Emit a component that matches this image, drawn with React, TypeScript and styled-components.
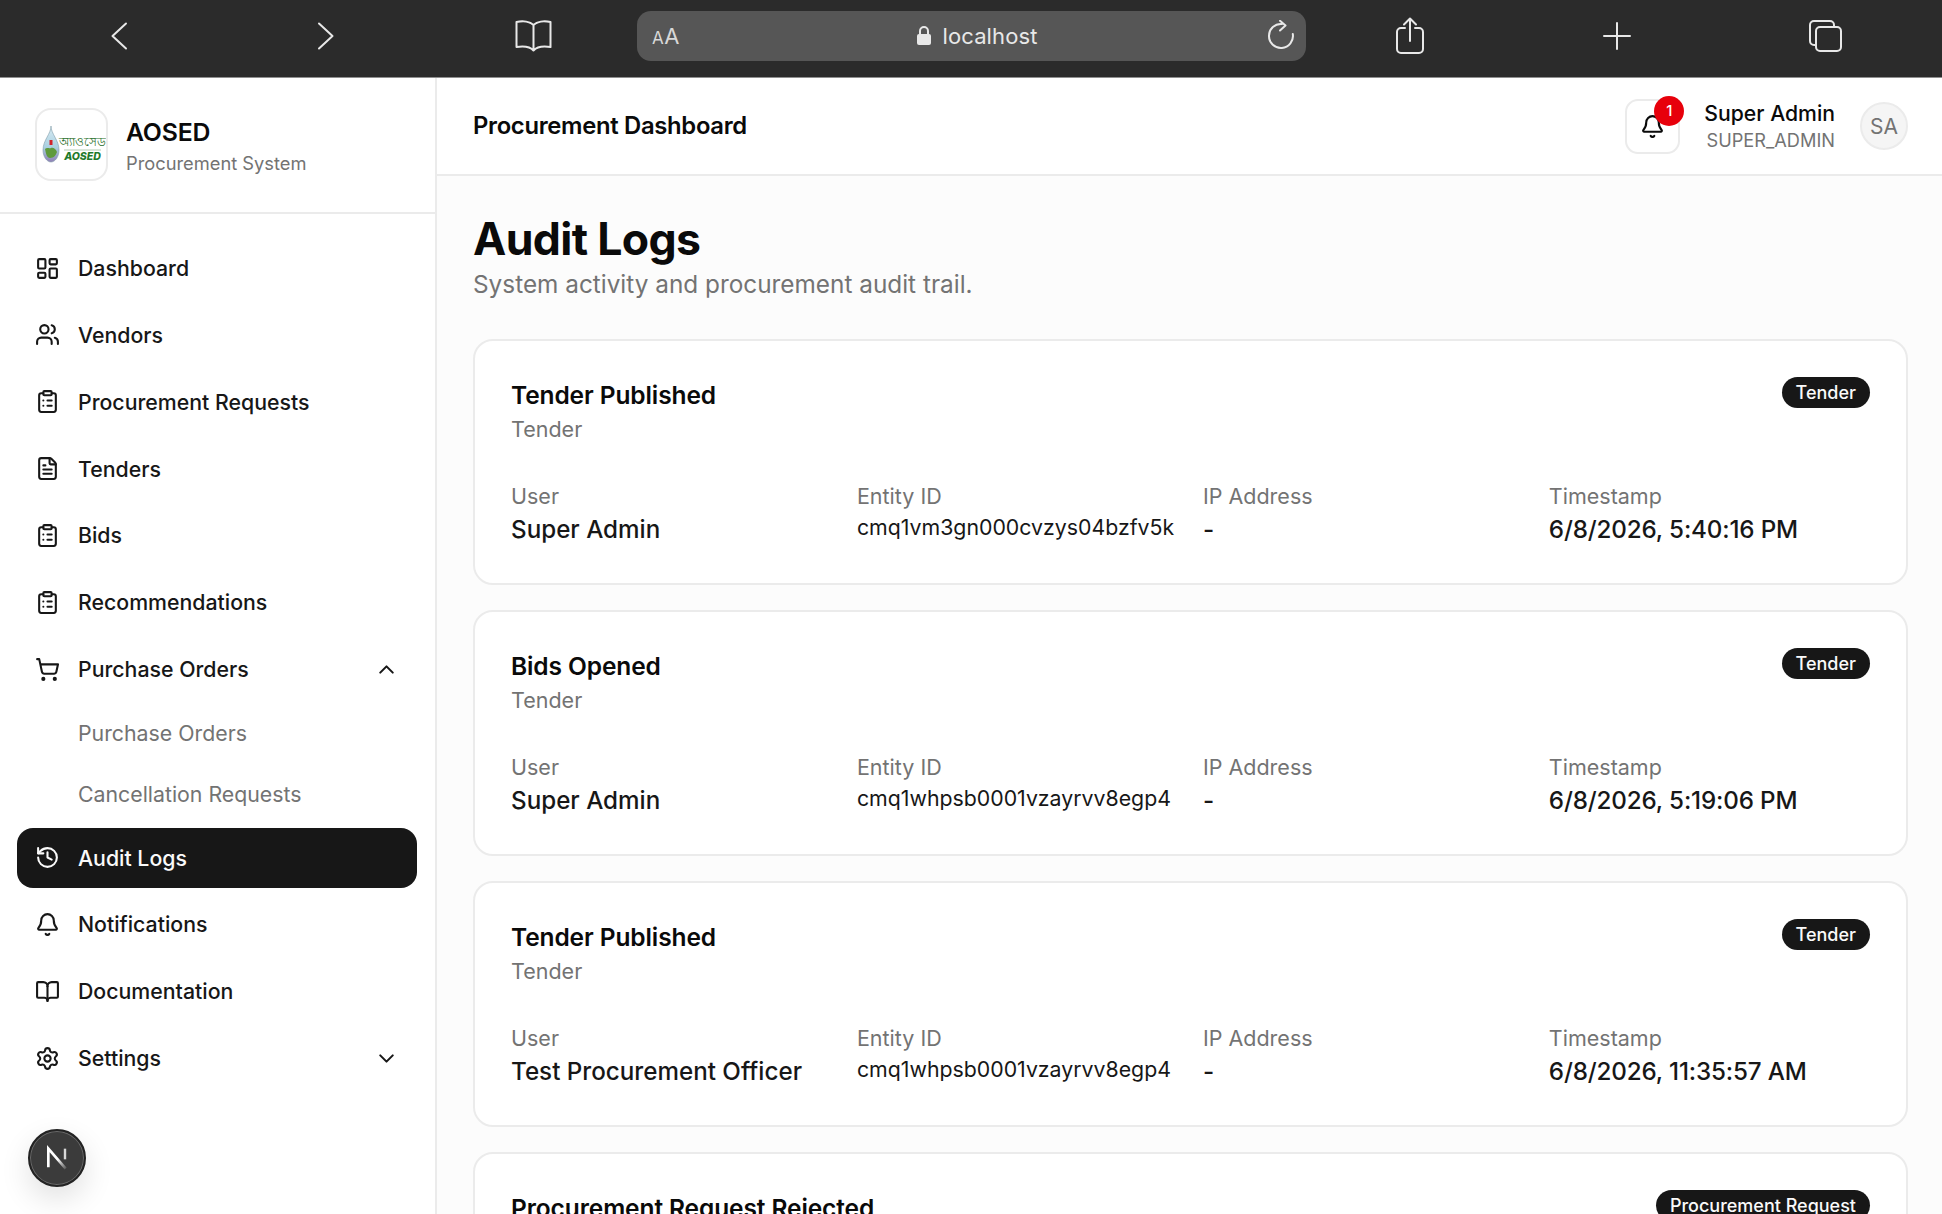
import styled, { createGlobalStyle } from 'styled-components';
import {
    LayoutDashboard,
    Users,
    ClipboardList,
    FileText,
    ShoppingCart,
    History,
    Bell,
    BookOpen,
    Settings,
    ChevronUp,
    ChevronDown,
} from 'lucide-react';

const GlobalStyle = createGlobalStyle`
    html, body {
        margin: 0;
        height: 1214px;
        overflow: hidden;
        background: #fcfcfc;
        font-family: Inter, "Noto Sans", sans-serif;
        color: #0a0a0a;
    }
    * {
        box-sizing: border-box;
    }
`;

const Page = styled.div`
    width: 1942px;
    height: 1214px;
    display: flex;
    flex-direction: column;
    overflow: hidden;
    position: relative;
`;

/* safari toolbar */
const BrowserBar = styled.div`
    height: 78px;
    flex: none;
    background: #2b2b2b;
    border-bottom: 1px solid #8f8f8f;
    padding-bottom: 5px;
    display: grid;
    grid-template-columns: 637px 669px 1fr;
    align-items: center;
    color: #e4e4e4;
`;

const BarSide = styled.div`
    display: flex;
    align-items: center;
    height: 100%;
    position: relative;
`;

const BarIcon = styled.svg<{ $left: number }>`
    position: absolute;
    left: ${p => p.$left}px;
    top: 50%;
    transform: translateY(-50%);
    fill: none;
    stroke: #e8e8e8;
    stroke-width: 2;
    stroke-linecap: round;
    stroke-linejoin: round;
`;

const UrlBox = styled.div`
    height: 50px;
    background: #565656;
    border-radius: 14px;
    display: grid;
    grid-template-columns: 1fr auto 1fr;
    align-items: center;
    padding: 0 11px 0 15px;
`;

const AaLabel = styled.div`
    font-size: 22px;
    color: #d8d8d8;
    letter-spacing: 0.5px;
    small {
        font-size: 17px;
    }
`;

const UrlText = styled.div`
    display: flex;
    align-items: center;
    gap: 11px;
    margin-left: 6px;
    font-size: 22px;
    letter-spacing: 0.1px;
    color: #e8e8e8;
`;

const ReloadWrap = styled.div`
    display: flex;
    justify-content: flex-end;
`;

/* shell */
const Shell = styled.div`
    flex: 1;
    min-height: 0;
    display: grid;
    grid-template-columns: 437px 1fr;
`;

const Sidebar = styled.aside`
    background: #fff;
    border-right: 2px solid #ebebeb;
    display: flex;
    flex-direction: column;
`;

const Brand = styled.div`
    height: 136px;
    flex: none;
    border-bottom: 2px solid #ebebeb;
    padding: 0 0 1px 35px;
    display: flex;
    align-items: center;
    gap: 18px;
`;

const LogoBox = styled.div`
    width: 73px;
    height: 73px;
    border: 2px solid #ebebeb;
    border-radius: 16px;
    background: #fff;
    overflow: hidden;
`;

const BrandText = styled.div`
    margin-top: 5px;
`;

const BrandName = styled.div`
    font-size: 24.8px;
    font-weight: 600;
    line-height: 32px;
    letter-spacing: -0.2px;
`;

const BrandSub = styled.div`
    font-size: 18.3px;
    line-height: 30px;
    color: #737373;
`;

const Nav = styled.nav`
    display: flex;
    flex-direction: column;
    gap: 6.85px;
    padding: 24px 18px 0 17px;
`;

const NavItem = styled.div<{ $active?: boolean }>`
    height: 60px;
    display: flex;
    align-items: center;
    gap: 18px;
    padding: 0 18px;
    border-radius: 16px;
    font-size: 21.3px;
    font-weight: 500;
    background: ${p => (p.$active ? '#171717' : 'transparent')};
    color: ${p => (p.$active ? '#fafafa' : '#171717')};
    svg {
        flex: none;
    }
`;

const NavLabel = styled.span`
    flex: 1;
`;

const NavChevron = styled.span`
    display: flex;
`;

const SubItem = styled.div`
    height: 54px;
    display: flex;
    align-items: center;
    padding-left: 61px;
    font-size: 21.3px;
    font-weight: 400;
    color: #737373;
`;

const DevBadge = styled.div`
    position: absolute;
    left: 28px;
    top: 1129px;
    width: 58px;
    height: 58px;
    border-radius: 50%;
    background: #3b3b3b;
    border: 2px solid #232323;
    box-shadow: 0 0 0 1px #6a6a6a inset, 0 12px 30px rgba(0, 0, 0, 0.12);
    display: flex;
    align-items: center;
    justify-content: center;
`;

/* main column */
const Main = styled.main`
    display: flex;
    flex-direction: column;
    min-width: 0;
    overflow: hidden;
    background: #fcfcfc;
`;

const Header = styled.header`
    height: 98px;
    flex: none;
    background: #fff;
    border-bottom: 2px solid #ebebeb;
    padding: 0 34px 0 36px;
    display: flex;
    align-items: center;
    justify-content: space-between;
`;

const HeaderTitle = styled.div`
    font-size: 23.8px;
    font-weight: 600;
    letter-spacing: -0.3px;
    margin-bottom: 2px;
`;

const HeaderRight = styled.div`
    display: flex;
    align-items: center;
`;

const BellButton = styled.div`
    width: 55px;
    height: 55px;
    border: 2px solid #ebebeb;
    border-radius: 13px;
    background: #fff;
    display: flex;
    align-items: center;
    justify-content: center;
    position: relative;
    margin-right: 24px;
`;

const BellCount = styled.span`
    position: absolute;
    top: -5px;
    right: -6px;
    width: 30px;
    height: 30px;
    border-radius: 50%;
    background: #e7000b;
    color: #fff;
    font-size: 14.8px;
    font-weight: 500;
    display: flex;
    align-items: center;
    justify-content: center;
`;

const UserBlock = styled.div`
    text-align: right;
    margin-right: 25px;
`;

const UserName = styled.div`
    font-size: 21.2px;
    font-weight: 500;
    line-height: 28px;
`;

const UserRole = styled.div`
    font-size: 18.2px;
    line-height: 27px;
    color: #737373;
`;

const Avatar = styled.div`
    width: 48px;
    height: 48px;
    border-radius: 50%;
    border: 2px solid #ebebeb;
    background: #f5f5f5;
    color: #737373;
    font-size: 21px;
    display: flex;
    align-items: center;
    justify-content: center;
`;

const Content = styled.div`
    padding: 36px 34px 0 36px;
`;

const PageTitle = styled.h1`
    margin: 0;
    font-size: 44.6px;
    font-weight: 700;
    line-height: 55px;
    letter-spacing: -0.65px;
    color: #0a0a0a;
`;

const PageSub = styled.p`
    margin: 0 0 38px;
    font-size: 24.35px;
    line-height: 34px;
    color: #737373;
`;

const CardList = styled.div`
    display: flex;
    flex-direction: column;
    gap: 25px;
`;

const Card = styled.section`
    height: 246px;
    flex: none;
    background: #fff;
    border: 2px solid #ebebeb;
    border-radius: 20px;
    padding: 36px 36px 0 36px;
`;

const CardTop = styled.div`
    display: flex;
    justify-content: space-between;
    align-items: flex-start;
    margin-bottom: 39px;
`;

const CardTitle = styled.div`
    font-size: 24.5px;
    font-weight: 600;
    line-height: 37px;
    letter-spacing: -0.1px;
`;

const CardEntity = styled.div`
    font-size: 21.5px;
    line-height: 30px;
    color: #737373;
`;

const Badge = styled.span`
    height: 31px;
    padding: 0 14px;
    border-radius: 16px;
    background: #171717;
    color: #fafafa;
    font-size: 18px;
    font-weight: 500;
    display: inline-flex;
    align-items: center;
`;

const Fields = styled.div`
    display: grid;
    grid-template-columns: repeat(4, 1fr);
    gap: 24.8px;
`;

const FieldLabel = styled.div`
    font-size: 21.5px;
    line-height: 26px;
    margin-bottom: 4px;
    color: #737373;
`;

const FieldValue = styled.div<{ $small?: boolean }>`
    font-size: ${p => (p.$small ? '21.3px' : '24.2px')};
    line-height: ${p => (p.$small ? '28px' : '33px')};
    font-weight: ${p => (p.$small ? 400 : 500)};
    color: #171717;
    white-space: nowrap;
`;

const FieldTime = styled(FieldValue)`
    letter-spacing: -0.15px;
`;

const navTop = [
    { label: 'Dashboard', icon: LayoutDashboard },
    { label: 'Vendors', icon: Users },
    { label: 'Procurement Requests', icon: ClipboardList },
    { label: 'Tenders', icon: FileText },
    { label: 'Bids', icon: ClipboardList },
    { label: 'Recommendations', icon: ClipboardList },
];

const logs = [
    { title: 'Tender Published', entity: 'Tender', user: 'Super Admin', id: 'cmq1vm3gn000cvzys04bzfv5k', time: '6/8/2026, 5:40:16 PM' },
    { title: 'Bids Opened', entity: 'Tender', user: 'Super Admin', id: 'cmq1whpsb0001vzayrvv8egp4', time: '6/8/2026, 5:19:06 PM' },
    { title: 'Tender Published', entity: 'Tender', user: 'Test Procurement Officer', id: 'cmq1whpsb0001vzayrvv8egp4', time: '6/8/2026, 11:35:57 AM' },
    { title: 'Procurement Request Rejected', entity: 'Procurement Request', user: 'Super Admin', id: 'cmq1whpsb0001vzayrvv8egp4', time: '6/8/2026, 11:20:10 AM' },
];

const AosedLogo = () => (
    <svg width="69" height="69" viewBox="0 0 69 69">
        <defs>
            <linearGradient id="drop" x1="0" y1="0" x2="0" y2="1">
                <stop offset="0" stopColor="#d9ecf4" />
                <stop offset="0.6" stopColor="#a9cfe0" />
                <stop offset="1" stopColor="#8f7fb5" />
            </linearGradient>
        </defs>
        <path d="M14 16c0 8 8 14 8 24 0 7-4 12-8 12s-8-5-8-12c0-10 8-16 8-24z" fill="url(#drop)" stroke="#7d9aa8" strokeWidth="0.6" />
        <path d="M8 39c2-2 4 0 6-1s5 1 6 4c-1 3-3 6-7 6-3 0-4-4-5-9z" fill="#5f9a3c" />
        <rect x="12.500" y="30" width="3" height="5" fill="#d2232a" />
        <text x="45.500" y="36" textAnchor="middle" fontSize="12" fontWeight="500" fill="#1f6e28" fontFamily="'Noto Sans', sans-serif">অ্যাওসেড</text>
        <line x1="27" y1="40" x2="64" y2="40" stroke="#9fbf9f" strokeWidth="0.8" />
        <text x="45.500" y="50" textAnchor="middle" fontSize="10.500" fontWeight="800" fontStyle="italic" fill="#1f7a2b" fontFamily="Inter, sans-serif">AOSED</text>
    </svg>
);

const NextMark = () => (
    <svg width="32" height="32" viewBox="0 0 24 24" fill="none">
        <defs>
            <linearGradient id="nfade" x1="6" y1="4" x2="20" y2="21" gradientUnits="userSpaceOnUse">
                <stop offset="0.5" stopColor="#fff" />
                <stop offset="1" stopColor="#fff" stopOpacity="0" />
            </linearGradient>
        </defs>
        <path d="M5.500 19V5l13 15" stroke="url(#nfade)" strokeWidth="2" />
        <path d="M18 5v8" stroke="#d8d8d8" strokeWidth="1.800" />
    </svg>
);

const BrowserToolbar = () => (
    <BrowserBar>
        <BarSide>
            <BarIcon $left={110} width="18" height="28" viewBox="0 0 18 28">
                <path d="M16 1.500 2.500 14 16 26.500" />
            </BarIcon>
            <BarIcon $left={317} width="18" height="28" viewBox="0 0 18 28">
                <path d="M2 1.500 15.500 14 2 26.500" />
            </BarIcon>
            <BarIcon $left={515} width="37" height="33" viewBox="0 0 37 33">
                <path d="M18.500 5.500C15 2 8 1 1.500 2.500v25C8 26.500 15 27 18.500 31c3.500-4 10.500-4.500 17-3.500v-25C29 1 22 2 18.500 5.500zM18.500 5.500V31" />
            </BarIcon>
        </BarSide>
        <UrlBox>
            <AaLabel>
                <small>A</small>A
            </AaLabel>
            <UrlText>
                <svg width="16" height="20" viewBox="0 0 16 20" fill="none">
                    <rect x="1" y="8" width="14" height="11" rx="2" fill="#e8e8e8" />
                    <path d="M4 8V5a4 4 0 0 1 8 0v3" stroke="#e8e8e8" strokeWidth="2" />
                </svg>
                localhost
            </UrlText>
            <ReloadWrap>
                <svg width="28" height="32" viewBox="0 0 28 32" fill="none" stroke="#e8e8e8" strokeWidth="2" strokeLinecap="round" strokeLinejoin="round">
                    <path d="M25.800 14A12 12 0 1 1 15 4" />
                    <path d="M13 0.800 18.500 5.500 13 10.500" />
                </svg>
            </ReloadWrap>
        </UrlBox>
        <BarSide>
            <BarIcon $left={89} width="30" height="38" viewBox="0 0 30 38">
                <path d="M15 24V2M9 7.500 15 1.500l6 6M10 11H6a4 4 0 0 0-4 4v17a4 4 0 0 0 4 4h18a4 4 0 0 0 4-4V15a4 4 0 0 0-4-4h-4" />
            </BarIcon>
            <BarIcon $left={297} width="28" height="28" viewBox="0 0 28 28">
                <path d="M14 1v26M1 14h26" />
            </BarIcon>
            <BarIcon $left={502} width="35" height="34" viewBox="0 0 35 34">
                <rect x="8" y="8" width="25" height="24" rx="4" />
                <path d="M8 26H6a4 4 0 0 1-4-4V6a4 4 0 0 1 4-4h16a4 4 0 0 1 4 4v2" />
            </BarIcon>
        </BarSide>
    </BrowserBar>
);

const SidebarNav = () => (
    <Sidebar>
        <Brand>
            <LogoBox>
                <AosedLogo />
            </LogoBox>
            <BrandText>
                <BrandName>AOSED</BrandName>
                <BrandSub>Procurement System</BrandSub>
            </BrandText>
        </Brand>
        <Nav>
            {navTop.map(item => (
                <NavItem key={item.label}>
                    <item.icon size={25} />
                    <NavLabel>{item.label}</NavLabel>
                </NavItem>
            ))}
            <NavItem>
                <ShoppingCart size={25} />
                <NavLabel>Purchase Orders</NavLabel>
                <NavChevron><ChevronUp size={25} /></NavChevron>
            </NavItem>
            <SubItem>Purchase Orders</SubItem>
            <SubItem>Cancellation Requests</SubItem>
            <NavItem $active>
                <History size={25} />
                <NavLabel>Audit Logs</NavLabel>
            </NavItem>
            <NavItem>
                <Bell size={25} />
                <NavLabel>Notifications</NavLabel>
            </NavItem>
            <NavItem>
                <BookOpen size={25} />
                <NavLabel>Documentation</NavLabel>
            </NavItem>
            <NavItem>
                <Settings size={25} />
                <NavLabel>Settings</NavLabel>
                <NavChevron><ChevronDown size={25} /></NavChevron>
            </NavItem>
        </Nav>
    </Sidebar>
);

const App = () => (
    <Page>
        <GlobalStyle />
        <BrowserToolbar />
        <Shell>
            <SidebarNav />
            <Main>
                <Header>
                    <HeaderTitle>Procurement Dashboard</HeaderTitle>
                    <HeaderRight>
                        <BellButton>
                            <Bell size={25} strokeWidth={2} />
                            <BellCount>1</BellCount>
                        </BellButton>
                        <UserBlock>
                            <UserName>Super Admin</UserName>
                            <UserRole>SUPER_ADMIN</UserRole>
                        </UserBlock>
                        <Avatar>SA</Avatar>
                    </HeaderRight>
                </Header>
                <Content>
                    <PageTitle>Audit Logs</PageTitle>
                    <PageSub>System activity and procurement audit trail.</PageSub>
                    <CardList>
                        {logs.map((log, i) => (
                            <Card key={i}>
                                <CardTop>
                                    <div>
                                        <CardTitle>{log.title}</CardTitle>
                                        <CardEntity>{log.entity}</CardEntity>
                                    </div>
                                    <Badge>{log.entity}</Badge>
                                </CardTop>
                                <Fields>
                                    <div>
                                        <FieldLabel>User</FieldLabel>
                                        <FieldValue>{log.user}</FieldValue>
                                    </div>
                                    <div>
                                        <FieldLabel>Entity ID</FieldLabel>
                                        <FieldValue $small>{log.id}</FieldValue>
                                    </div>
                                    <div>
                                        <FieldLabel>IP Address</FieldLabel>
                                        <FieldValue>-</FieldValue>
                                    </div>
                                    <div>
                                        <FieldLabel>Timestamp</FieldLabel>
                                        <FieldTime>{log.time}</FieldTime>
                                    </div>
                                </Fields>
                            </Card>
                        ))}
                    </CardList>
                </Content>
            </Main>
        </Shell>
        <DevBadge>
            <NextMark />
        </DevBadge>
    </Page>
);

export default App;
